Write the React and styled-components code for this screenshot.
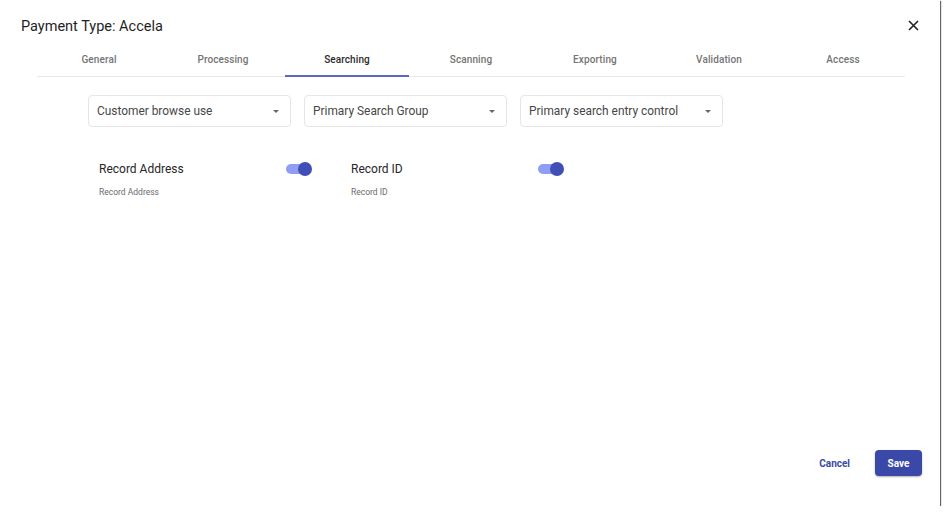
import styled, { createGlobalStyle } from "styled-components";

const Global = createGlobalStyle`
  body {
    margin: 0;
    background: #ffffff;
    font-family: Roboto, "Liberation Sans", sans-serif;
  }
`;

const Dialog = styled.div`
  width: 940px;
  height: 506px;
  background: #fff;
  box-shadow: 1px 1px 1px rgba(0, 0, 0, 0.6);
  display: flex;
  flex-direction: column;
  box-sizing: border-box;
`;

const Header = styled.div`
  display: flex;
  justify-content: space-between;
  align-items: flex-start;
  padding: 17px 20px 0 21px;
`;

const Title = styled.h2`
  margin: 0;
  font-size: 14.5px;
  font-weight: 400;
  line-height: 20px;
  color: #1f1f1f;
`;

const CloseBtn = styled.button`
  border: none;
  background: none;
  padding: 0;
  margin-top: 1px;
  width: 14px;
  height: 14px;
  display: flex;
  align-items: center;
  justify-content: center;
  cursor: pointer;
`;

const Tabs = styled.div`
  display: flex;
  margin: 7px 35px 0 37px;
  border-bottom: 1px solid #e8e8ec;
`;

const Tab = styled.div`
  flex: 1;
  height: 31px;
  display: flex;
  align-items: center;
  justify-content: center;
  font-size: 10px;
  font-weight: 500;
  letter-spacing: 0.1px;
  color: ${(p) => (p.$active ? "#2b2b2b" : "#747474")};
  border-bottom: 2px solid ${(p) => (p.$active ? "#5c67c4" : "transparent")};
  margin-bottom: -1px;
`;

const Body = styled.div`
  flex: 1;
  padding: 18px 0 0 88px;
`;

const SelectRow = styled.div`
  display: flex;
  gap: 13px;
`;

const Select = styled.div`
  width: 203px;
  height: 32px;
  box-sizing: border-box;
  border: 1px solid #e6e6e6;
  border-radius: 4px;
  display: flex;
  align-items: center;
  justify-content: space-between;
  padding: 0 11px 0 8px;
  font-size: 11.9px;
  color: #474747;
`;

const Caret = styled.span`
  width: 0;
  height: 0;
  border-left: 3.5px solid transparent;
  border-right: 3.5px solid transparent;
  border-top: 3.5px solid #666;
`;

const ToggleRow = styled.div`
  display: flex;
  gap: 39px;
  margin-top: 34px;
  padding-left: 11px;
`;

const Group = styled.div`
  width: 213px;
`;

const GroupTop = styled.div`
  display: flex;
  justify-content: space-between;
  align-items: center;
  height: 16px;
`;

const Label = styled.span`
  font-size: 12px;
  color: #262626;
`;

const Hint = styled.div`
  margin-top: 10px;
  font-size: 8.5px;
  color: #6a6a6a;
`;

const Switch = styled.span`
  position: relative;
  width: 26px;
  height: 14px;
  display: inline-block;

  &::before {
    content: "";
    position: absolute;
    left: 0;
    top: 2px;
    width: 22px;
    height: 10px;
    border-radius: 5px;
    background: #909df4;
  }

  &::after {
    content: "";
    position: absolute;
    right: 0;
    top: 0;
    width: 14px;
    height: 14px;
    border-radius: 50%;
    background: #3f4fb6;
  }
`;

const Footer = styled.div`
  display: flex;
  justify-content: flex-end;
  align-items: center;
  gap: 17px;
  padding: 0 18px 30px 0;
`;

const TextBtn = styled.button`
  border: none;
  background: none;
  font-family: inherit;
  font-size: 10px;
  font-weight: 700;
  color: #3a48a8;
  padding: 0 8px;
  height: 26px;
`;

const SaveBtn = styled.button`
  border: none;
  background: #3a48a8;
  color: #fff;
  font-family: inherit;
  font-size: 10px;
  font-weight: 700;
  width: 47px;
  height: 26px;
  border-radius: 4px;
  box-shadow: 0 1px 2px rgba(0, 0, 0, 0.3);
`;

const tabs = ["General", "Processing", "Searching", "Scanning", "Exporting", "Validation", "Access"];
const selects = ["Customer browse use", "Primary Search Group", "Primary search entry control"];
const toggles = ["Record Address", "Record ID"];

export default function App() {
  return (
    <>
      <Global />
      <Dialog>
        <Header>
          <Title>Payment Type: Accela</Title>
          <CloseBtn>
            <svg width="11" height="11" viewBox="0 0 11 11">
              <path d="M1 1L10 10M10 1L1 10" stroke="#222" strokeWidth="1.6" />
            </svg>
          </CloseBtn>
        </Header>
        <Tabs>
          {tabs.map((t) => (
            <Tab key={t} $active={t === "Searching"}>
              {t}
            </Tab>
          ))}
        </Tabs>
        <Body>
          <SelectRow>
            {selects.map((s) => (
              <Select key={s}>
                {s}
                <Caret />
              </Select>
            ))}
          </SelectRow>
          <ToggleRow>
            {toggles.map((t) => (
              <Group key={t}>
                <GroupTop>
                  <Label>{t}</Label>
                  <Switch />
                </GroupTop>
                <Hint>{t}</Hint>
              </Group>
            ))}
          </ToggleRow>
        </Body>
        <Footer>
          <TextBtn>Cancel</TextBtn>
          <SaveBtn>Save</SaveBtn>
        </Footer>
      </Dialog>
    </>
  );
}
